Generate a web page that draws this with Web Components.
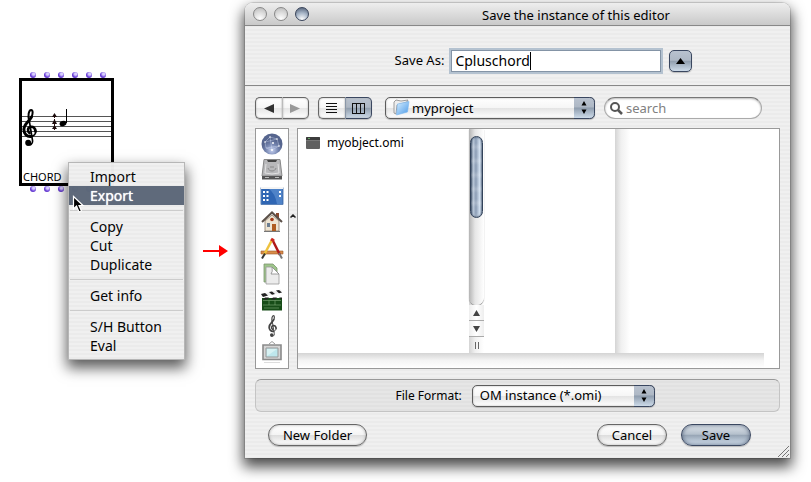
<!DOCTYPE html>
<html lang="en">
<head>
<meta charset="utf-8">
<title>Save the instance of this editor</title>
<style>
  html, body { margin: 0; background: #fff; }
  body { font: 13px/19px "Noto Sans", "Open Sans", sans-serif; color: #000; overflow: hidden; }
</style>
</head>
<body>
<export-scene></export-scene>
<script>
const STRIPES = 'repeating-linear-gradient(#f0f0f0 0 2px, #ebebeb 2px 4px)';

function define(name, html, setup) {
  const template = document.createElement('template');
  template.innerHTML = html;
  customElements.define(name, class extends HTMLElement {
    constructor() {
      super();
      this.attachShadow({ mode: 'open' }).append(template.content.cloneNode(true));
    }
    connectedCallback() { if (setup) setup(this, this.shadowRoot); }
  });
}

/* ---------- left side: patch object and its menu ---------- */

define('treble-clef', `
<style>
  :host { display: block; }
  svg { display: block; width: 100%; height: 100%; }
</style>
<svg viewBox="0 0 44 112" fill="none" stroke="currentColor" stroke-linecap="round" aria-hidden="true">
  <path stroke-width="6" d="M21 36C16 20 20 3 27 3C33 3 33 16 27 27"/>
  <path stroke-width="9" d="M28 24C21 39 5 44 5 62C5 76 15 84 26 83"/>
  <path stroke-width="5" d="M24 83C36 83 42 75 41 66"/>
  <path stroke-width="8" d="M40 68C40 58 33 53 26 54C16 56 15 67 22 73"/>
  <path stroke-width="5" d="M21 34L31 94C33 106 24 111 15 108"/>
  <circle cx="18" cy="102" r="9" fill="currentColor" stroke="none"/>
</svg>`);

define('port-row', `
<style>
  :host { display: flex; gap: 8px; height: 6px; padding-left: 11px; }
  i { width: 6px; height: 6px; border-radius: 50%; background: radial-gradient(circle at 60% 35%, #d9d0ff 0 1px, #6a3fd8 3px, #4a20b0); }
</style>`, (host, root) => {
  for (let n = 0; n < 6; n++) root.append(document.createElement('i'));
});

define('chord-object', `
<style>
  :host { display: block; width: 95px; }
  .box { box-sizing: border-box; height: 108px; border: 3px solid #000; background: #fff; display: flex; flex-direction: column; }
  svg { display: block; width: 100%; height: 89px; }
  .staff { display: grid; }
  .staff > * { grid-area: 1 / 1; }
  treble-clef { width: 15px; height: 37px; margin-top: 28px; }
  .name { font-size: 11px; line-height: 13px; padding-left: 1px; }
</style>
<port-row></port-row>
<div class="box">
  <div class="staff">
    <svg viewBox="0 0 89 89" aria-hidden="true">
      <g stroke="#555" shape-rendering="crispEdges">
        <path d="M0 35.500H89M0 40.500H89M0 45.500H89M0 50.500H89M0 55.500H89"/>
      </g>
      <path d="M32.500 34V50" stroke="#301010" stroke-width="1" stroke-dasharray="3 1"/>
      <path d="M30 36L32.500 32L35 36ZM30 43L32.500 38L35 43ZM30 48L32.500 44L35 48Z" fill="#1a0a0a"/>
      <ellipse cx="41" cy="42.500" rx="3.500" ry="2.600" transform="rotate(-20 41 42.500)"/>
      <path d="M44.500 42V28" stroke="#000"/>
    </svg>
    <treble-clef></treble-clef>
  </div>
  <div class="name">CHORD</div>
</div>
<port-row></port-row>`);

define('menu-item', `
<style>
  :host { display: block; }
  button { display: block; width: 100%; height: 19px; border: 0; padding: 0 0 0 21px; background: none; font: inherit; font-size: 14px; line-height: 19px; text-align: left; color: #000; }
  :host([selected]) button { background: #5c6879; color: #fff; text-shadow: 0 0 1px #fff; }
</style>
<button type="button" role="menuitem"><slot></slot></button>`);

define('menu-rule', `
<style>
  :host { display: block; height: 12px; padding: 5px 1px 0; box-sizing: border-box; }
  hr { margin: 0; border: 0; height: 1px; background: #ccc; }
</style><hr>`);

define('context-menu', `
<style>
  :host { display: block; box-sizing: border-box; width: 117px; padding: 4px 0; border: 1px solid #b5b5b5; background: ${STRIPES}; opacity: .98; box-shadow: 0 7px 13px 1px rgba(0,0,0,.65); }
</style>
<slot></slot>`);

define('mouse-pointer', `
<style>:host { display: block; width: 13px; height: 19px; } svg { display: block; }</style>
<svg width="13" height="19" viewBox="0 0 13 19" aria-hidden="true"><path d="M1.500 1.500V14L4.500 11L7 17L9.500 16L7 10.500H11Z" fill="#000" stroke="#fff" stroke-width="1.200"/></svg>`);

define('patch-canvas', `
<style>
  :host { display: block; position: relative; height: 482px; }
  chord-object { position: absolute; left: 19px; top: 72px; }
  context-menu { position: absolute; left: 68px; top: 162px; }
  mouse-pointer { position: absolute; left: 72px; top: 195px; }
  svg { position: absolute; left: 203px; top: 245px; }
</style>
<chord-object></chord-object>
<context-menu role="menu">
  <menu-item>Import</menu-item>
  <menu-item selected>Export</menu-item>
  <menu-rule></menu-rule>
  <menu-item>Copy</menu-item>
  <menu-item>Cut</menu-item>
  <menu-item>Duplicate</menu-item>
  <menu-rule></menu-rule>
  <menu-item>Get info</menu-item>
  <menu-rule></menu-rule>
  <menu-item>S/H Button</menu-item>
  <menu-item>Eval</menu-item>
</context-menu>
<mouse-pointer></mouse-pointer>
<svg width="25" height="12" viewBox="0 0 25 12" aria-hidden="true"><path d="M0 5H16V0L25 6L16 12V7H0Z" fill="#f00"/></svg>`);

/* ---------- controls ---------- */

define('aqua-button', `
<style>
  :host { display: block; }
  button { box-sizing: border-box; display: block; width: 100%; height: 22px; padding: 0 13px; border: 1px solid #666; border-radius: 11px; font: inherit; line-height: 19px; color: #000; white-space: nowrap;
    background: linear-gradient(#fff, #f4f4f4 48%, #dedede 52%, #fff); box-shadow: inset 0 0 3px #aaa, 0 1px 1px #bbb; }
  :host([primary]) button { border-color: #3a4760; background: linear-gradient(#dfe5ec, #b5c0cc 46%, #98a6b6 52%, #d5e2f0); box-shadow: inset 0 0 4px #56657c, 0 1px 1px #bbb; }
</style>
<button type="button"><slot></slot></button>`);

define('aqua-select', `
<style>
  :host { display: flex; align-items: center; gap: 10px; }
  .field { position: relative; flex: 1; }
  select { appearance: none; box-sizing: border-box; display: block; width: 100%; height: 22px; margin: 0; padding: 0 24px 0 7px; border: 1px solid #5c5c5c; border-radius: 5px; font: inherit; line-height: 19px; color: #000;
    background: linear-gradient(#fff, #f6f6f6 48%, #e4e4e4 52%, #fff); box-shadow: inset 0 0 2px #aaa, 0 1px 1px #bbb; }
  :host([icon]) select { padding-left: 26px; }
  .cap { position: absolute; right: 0; top: 0; width: 21px; height: 22px; pointer-events: none; }
  .folder { position: absolute; left: 8px; top: 2px; pointer-events: none; }
  :host(:not([icon])) .folder { display: none; }
  label { font-size: 12px; }
  label:empty { display: none; }
</style>
<label for="s"></label>
<div class="field">
  <select id="s"><option></option></select>
  <svg class="folder" width="17" height="17" viewBox="0 0 17 17" aria-hidden="true">
    <defs><linearGradient id="f" x1="0" x2="1" y2="1"><stop offset="0" stop-color="#d8efff"/><stop offset="1" stop-color="#4b9ae8"/></linearGradient></defs>
    <path d="M1 3L3 1L8 2L15 1L14 3L4 6L3 15L1 14Z" fill="#eee" stroke="#888" stroke-width=".8"/>
    <path d="M4.500 5L16 2.500L14.500 13L3.500 16Z" fill="url(#f)" stroke="#79b5ec" stroke-width=".6"/>
  </svg>
  <svg class="cap" viewBox="0 0 21 22" aria-hidden="true">
    <defs><linearGradient id="g" x2="0" y2="1"><stop offset="0" stop-color="#b9c2cf"/><stop offset=".45" stop-color="#aeb8c5"/><stop offset=".5" stop-color="#8f9dae"/><stop offset="1" stop-color="#d0deec"/></linearGradient></defs>
    <path d="M0 .5H15.500Q20.500 .5 20.500 5.500V16.500Q20.500 21.500 15.500 21.500H0Z" fill="url(#g)"/>
    <path d="M0 .5H15.500Q20.500 .5 20.500 5.500V16.500Q20.500 21.500 15.500 21.500H0" fill="none" stroke="#3a4760"/>
    <path d="M7.500 8.500L10 4L12.500 8.500ZM7.500 12.500L10 17L12.500 12.500Z"/>
  </svg>
</div>`, (host, root) => {
  root.querySelector('label').textContent = host.getAttribute('label') || '';
  root.querySelector('option').textContent = host.getAttribute('value');
  if (!host.hasAttribute('label')) root.querySelector('select').setAttribute('aria-label', 'Folder');
});

define('segment-pair', `
<style>
  :host { display: flex; width: 54px; }
  button { flex: 1; height: 22px; padding: 0; border: 1px solid #666; background: linear-gradient(#fff, #f6f6f6 48%, #e6e6e6 52%, #fff); box-shadow: inset 0 0 2px #aaa, 0 1px 1px #bbb; display: grid; place-items: center; }
  button:first-of-type { border-radius: 5px 0 0 5px; border-right-width: 0; }
  button:last-of-type { border-radius: 0 5px 5px 0; border-left-color: #bbb; }
  :host([pressed]) button:last-of-type { background: linear-gradient(#b9c2cf, #aeb8c5 46%, #919faf 52%, #cddbe9); border-color: #3a4760; border-left-color: #8a97a8; }
</style>
<button type="button"><slot name="first"></slot></button><button type="button"><slot name="last"></slot></button>`, (host, root) => {
  const names = host.getAttribute('names').split(',');
  root.querySelectorAll('button').forEach((b, i) => b.setAttribute('aria-label', names[i]));
});

define('search-field', `
<style>
  :host { display: flex; align-items: center; gap: 3px; box-sizing: border-box; height: 22px; padding: 0 8px 0 5px; border: 1px solid #aaa; border-top-color: #777; border-radius: 11px; background: #fff; box-shadow: inset 0 1px 2px #bbb; }
  svg { flex: none; }
  input { flex: 1; min-width: 0; border: 0; padding: 0; outline: 0; background: none; font: inherit; line-height: 19px; color: #000; }
  input::placeholder { color: #808080; opacity: 1; }
</style>
<svg width="13" height="13" viewBox="0 0 13 13" fill="none" stroke="#555" aria-hidden="true"><circle cx="5" cy="5" r="4" stroke-width="2"/><path d="M8 8L12 12" stroke-width="2.500"/></svg>
<input type="search" placeholder="search" aria-label="search">`);

define('title-bar', `
<style>
  :host { display: flex; align-items: center; gap: 7px; box-sizing: border-box; height: 23px; padding-left: 8px; border-bottom: 1px solid #888; border-radius: 8px 8px 0 0; background: linear-gradient(#eee, #c9c9c9); }
  button { width: 14px; height: 14px; padding: 0; border: 1px solid #888; border-radius: 50%; background: radial-gradient(circle at 50% 90%, #fff, #ddd 50%, #b8b8b8); }
  button:nth-of-type(3) { border-color: #39445a; background: radial-gradient(circle at 50% 95%, #fff, #a8b6c8 50%, #4a5870); }
  h1 { flex: 1; margin: 0 0 0 46px; font: inherit; line-height: 22px; padding-top: 1px; text-align: center; }
</style>
<button type="button" aria-label="Close"></button><button type="button" aria-label="Minimize"></button><button type="button" aria-label="Zoom"></button>
<h1><slot></slot></h1>`);

define('save-as-row', `
<style>
  :host { display: flex; align-items: center; justify-content: center; box-sizing: border-box; height: 60px; padding: 10px 0 0 52px; border-bottom: 1px solid #888; }
  .field { position: relative; margin: 0 8px 0 7px; }
  input { display: block; box-sizing: border-box; width: 210px; height: 22px; padding: 0 3px; border: 1px solid #8494a6; outline: 0; box-shadow: 0 0 0 2px #b4c2d0; font: inherit; font-size: 14px; line-height: 19px; color: #000; background: #fff; caret-color: transparent; }
  .caret { position: absolute; inset: 2px auto 2px 4px; display: flex; font-size: 14px; pointer-events: none; }
  .caret::before { content: attr(data-before); visibility: hidden; }
  .caret::after { content: ""; width: 1px; background: #000; }
  button { width: 23px; height: 22px; padding: 0; border: 1px solid #3a4760; border-radius: 5px; background: linear-gradient(#b9c2cf, #aeb8c5 46%, #919faf 52%, #cddbe9); box-shadow: 0 1px 1px #bbb; display: grid; place-items: center; }
</style>
<label for="name">Save As:</label>
<span class="field"><input id="name" type="text" value="Cpluschord"><span class="caret" data-before="Cpluschord"></span></span>
<button type="button" aria-label="Collapse"><svg width="9" height="6" viewBox="0 0 9 6" aria-hidden="true"><path d="M0 6L4.500 0L9 6Z"/></svg></button>`);

/* ---------- file browser ---------- */

define('places-list', `
<style>
  :host { display: block; box-sizing: border-box; width: 34px; border: 1px solid #999; background: #fff; padding-top: 2px; }
  nav { display: flex; flex-direction: column; }
  button { height: 26px; padding: 0; border: 0; background: none; display: grid; place-items: center; }
  svg { display: block; width: 24px; height: 24px; }
  treble-clef { width: 11px; height: 22px; color: #444; }
</style>
<nav aria-label="Places">
  <button type="button" aria-label="Network"><svg viewBox="0 0 24 24"><defs><radialGradient id="n" cx=".5" cy=".8"><stop offset="0" stop-color="#c4cff0"/><stop offset=".6" stop-color="#7484ae"/><stop offset="1" stop-color="#56658e"/></radialGradient></defs><circle cx="12" cy="12" r="10.500" fill="url(#n)"/><path d="M5 10L10 5L17 7L19 14L12 18L6 16ZM10 5L12 18M5 10L17 7M6 16L19 14" fill="none" stroke="#d5ddf5" stroke-width=".4"/><g fill="#fff"><circle cx="5" cy="10" r=".8"/><circle cx="10" cy="5" r=".8"/><circle cx="17" cy="7" r=".8"/><circle cx="19" cy="14" r=".8"/><circle cx="12" cy="18" r="1"/><circle cx="13" cy="11" r="1"/></g></svg></button>
  <button type="button" aria-label="Disk"><svg viewBox="0 0 24 24"><path d="M4 1.500H20L22 18H2Z" fill="#b8b8ba" stroke="#888"/><path d="M2 18H22V21.500H2Z" fill="#555"/><path d="M7 2H17L16 4H8Z" fill="#444"/><path d="M6 6L5 15Q12 17 19 15L18 6" fill="none" stroke="#e2e2e2"/><path d="M8 10C9 14 15 14 16 10M10 9H14" fill="none" stroke="#888"/><path d="M5 19.500H9M15 19.500H19" stroke="#bbb"/></svg></button>
  <button type="button" aria-label="Desktop"><svg viewBox="0 0 24 24"><path d="M1 3.500H23V20.500H1Z" fill="#2f66b4" stroke="#5d83b8"/><path d="M9 5L22 4V20H17Q15 9 9 5Z" fill="#4f83c8"/><path d="M1 3H23V5H1Z" fill="#f4f4f4"/><path d="M3 7H5V9H3ZM3 11H5V13H3ZM3 15H5V17H3ZM6.500 7H8.500V9H6.500ZM6.500 11H8.500V13H6.500ZM6.500 15H8.500V17H6.500ZM19 7H21V9H19ZM19 11H21V13H19Z" fill="#fff"/></svg></button>
  <button type="button" aria-label="Home"><svg viewBox="0 0 24 24"><path d="M5 11L12 5L19 11V21H5Z" fill="#eee4d2" stroke="#8a7a68" stroke-width=".8"/><path d="M16 3H19V9L16 6Z" fill="#8a4a30"/><path d="M2 12L12 2.500L22 12" fill="none" stroke="#5b5048" stroke-width="2"/><path d="M12 14H16V21H12Z" fill="#b05c20"/><path d="M7 13H10V17H7Z" fill="#6d7e91"/><circle cx="12" cy="9.500" r="1.800" fill="#a33a18"/><path d="M4 21.500H20" stroke="#777"/></svg></button>
  <button type="button" aria-label="Applications"><svg viewBox="0 0 24 24"><path d="M1 15H23V18H1Z" fill="#d98d4a" stroke="#9a5826" stroke-width=".6"/><path d="M12 3L20 19" stroke="#b01818" stroke-width="2.500"/><path d="M19 17L22 22.500" stroke="#777" stroke-width="2"/><path d="M12 4L4 19" stroke="#eec23e" stroke-width="2.500"/><path d="M5 17.500L2 22.500" stroke="#333" stroke-width="2"/><path d="M11 3L14 5" stroke="#cc2a20" stroke-width="3"/></svg></button>
  <button type="button" aria-label="Documents"><svg viewBox="0 0 24 24"><path d="M4 2H13L17 6V20H4Z" fill="#9ec58a" stroke="#7c9670" stroke-width=".8"/><path d="M6 5H12L19 12V22H6Z" fill="#ececec" stroke="#999" stroke-width=".8"/><path d="M12 5Q13 10 11 12H19Z" fill="#fff" stroke="#888" stroke-width=".8"/></svg></button>
  <button type="button" aria-label="Movies"><svg viewBox="0 0 24 24"><path d="M2 10H22V22.500H2Z" fill="#174d18"/><path d="M1 6L21 1.500L22 4.500L2 9Z" fill="#eee"/><path d="M1 6L5 5L8 7.500L3 9ZM9 4L12 3.500L15 6L12 6.800ZM16 2.500L19 2L22 4.500L19 5.200ZM5 9.500H9L7 11.500H3ZM13 9.500H17L15 11.500H11ZM19 9.500H22V11.500Z" fill="#222"/><path d="M3 12.500H21M3 17H21M9 12.500V17M15 12.500V17M4 20H19" stroke="#96be8e" stroke-width=".5"/></svg></button>
  <button type="button" aria-label="Music"><treble-clef></treble-clef></button>
  <button type="button" aria-label="Pictures"><svg viewBox="0 0 24 24"><path d="M9 4L12 1.500L15 4" fill="none" stroke="#999"/><path d="M3 5H21V19.500H3Z" fill="#d5d5d5" stroke="#8a8a8a" stroke-width="1.600"/><path d="M6 8H18V17H6Z" fill="#bee7ec" stroke="#999"/><path d="M7 9H17L7 16Z" fill="#d8f2f3"/><path d="M4 22.500H20" stroke="#ddd"/></svg></button>
</nav>`);

define('scroll-track', `
<style>
  :host { display: flex; flex-direction: column; flex: none; width: 15px; background: linear-gradient(90deg, #d4d4d4, #f0f0f0 40%, #fff); }
  :host(:not([active])) * { display: none; }
  .track { flex: 1; padding: 7px 0 0; border-radius: 0 0 8px 8px; background: linear-gradient(90deg, #b4b4b4, #e6e6e6 40%, #fff); box-shadow: 0 1px 1px #888; }
  .thumb { box-sizing: border-box; height: 82px; margin: 0 1px; border: 1px solid #33435a; border-radius: 7px; background: repeating-linear-gradient(transparent 0 6px, rgba(255,255,255,.18) 10px, transparent 14px), linear-gradient(90deg, #56677f, #b9c7d8 20%, #8c9db5 45%, #d4e2f2 80%, #8293a9); box-shadow: inset 0 0 2px #33435a; }
  button { height: 16px; padding: 0; border: 0; border-bottom: 1px solid #aaa; background: linear-gradient(90deg, #eee, #fff 50%, #eee); display: grid; place-items: center; }
  .grip { height: 16px; display: flex; justify-content: center; align-items: center; gap: 2px; }
  .grip i { width: 1px; height: 7px; background: #666; }
</style>
<div class="track"><div class="thumb"></div></div>
<button type="button" aria-label="Scroll up"><svg width="7" height="6" viewBox="0 0 7 6" fill="#444"><path d="M0 6L3.500 0L7 6Z"/></svg></button>
<button type="button" aria-label="Scroll down"><svg width="7" height="6" viewBox="0 0 7 6" fill="#444"><path d="M0 0L3.500 6L7 0Z"/></svg></button>
<div class="grip"><i></i><i></i></div>`);

define('file-row', `
<style>
  :host { display: block; }
  button { display: flex; align-items: center; gap: 7px; width: 100%; height: 19px; border: 0; padding: 0 8px; background: none; font: inherit; font-size: 12px; line-height: 19px; color: #000; text-align: left; }
</style>
<button type="button"><svg width="14" height="12" viewBox="0 0 14 12" aria-hidden="true"><rect width="14" height="12" rx="1" fill="#606060"/><path d="M0 1Q0 0 1 0H13Q14 0 14 1V3H0Z" fill="#3c3c3c"/><path d="M2 1.500H4" stroke="#6a6"/><path d="M0 3.500H14" stroke="#777"/></svg><slot></slot></button>`);

define('column-browser', `
<style>
  :host { display: flex; flex-direction: column; box-sizing: border-box; border: 1px solid #999; background: #fff; }
  .columns { flex: 1; display: flex; }
  .column { flex: 0 0 auto; box-sizing: border-box; width: 131px; }
  .column.files { width: 171px; padding-top: 4px; }
  .scroll { height: 15px; margin-right: 15px; background: linear-gradient(#d4d4d4, #f4f4f4 50%, #fff); }
</style>
<div class="columns">
  <div class="column files"><slot></slot></div><scroll-track active></scroll-track>
  <div class="column"></div><scroll-track></scroll-track>
</div>
<div class="scroll"></div>`);

/* ---------- dialog ---------- */

define('save-dialog', `
<style>
  :host { display: block; border-radius: 8px 8px 0 0; background: ${STRIPES}; box-shadow: 0 0 0 1px rgba(0,0,0,.12), 0 7px 14px 2px rgba(0,0,0,.7); position: relative; }
  .tools { display: flex; align-items: center; gap: 9px; padding: 11px 28px 9px 10px; }
  segment-pair { flex: none; }
  segment-pair + segment-pair { margin-right: 4px; }
  aqua-select.folder { flex: 210 1 0; min-width: 0; }
  search-field { flex: 143 1 0; min-width: 0; }
  .browser { display: flex; height: 241px; margin: 0 10px; }
  .toggle { width: 8px; padding: 0; border: 0; background: none; display: grid; place-items: center; margin-top: -65px; }
  .toggle svg { display: block; }
  column-browser { flex: 1; min-width: 0; }
  .format { display: flex; justify-content: center; align-items: center; box-sizing: border-box; height: 33px; margin: 10px 10px 12px; padding-left: 15px; border: 1px solid #c4c4c4; border-top-color: #999; border-radius: 6px; background: rgba(0,0,0,.04); }
  .format aqua-select { width: 259px; }
  .actions { display: flex; gap: 14px; padding: 0 39px 12px 23px; }
  .actions aqua-button { width: 70px; }
  .actions .new { width: 99px; margin-right: auto; }
  .grip { position: absolute; right: 1px; bottom: 1px; }
</style>
<title-bar>Save the instance of this editor</title-bar>
<save-as-row></save-as-row>
<div class="tools">
  <segment-pair names="Back,Forward">
    <svg slot="first" width="10" height="9" viewBox="0 0 10 9"><path d="M0 4.500L10 0V9Z" fill="#333"/></svg>
    <svg slot="last" width="10" height="9" viewBox="0 0 10 9"><path d="M10 4.500L0 0V9Z" fill="#999"/></svg>
  </segment-pair>
  <segment-pair pressed names="List view,Column view">
    <svg slot="first" width="11" height="11" viewBox="0 0 11 11" stroke="#111" shape-rendering="crispEdges"><path d="M0 .5H11M0 3.500H11M0 6.500H11M0 9.500H11"/></svg>
    <svg slot="last" width="13" height="11" viewBox="0 0 13 11" fill="none" stroke="#111" shape-rendering="crispEdges"><path d="M.5 .5H12.500V10.500H.5ZM4.500 0V11M8.500 0V11"/></svg>
  </segment-pair>
  <aqua-select class="folder" icon value="myproject"></aqua-select>
  <search-field></search-field>
</div>
<div class="browser">
  <places-list></places-list>
  <button class="toggle" type="button" aria-label="Hide places"><svg width="6" height="4" viewBox="0 0 6 4"><path d="M.5 3.500L3 1L5.500 3.500" fill="none" stroke="#222" stroke-width="1.500"/></svg></button>
  <column-browser><file-row>myobject.omi</file-row></column-browser>
</div>
<div class="format"><aqua-select label="File Format:" value="OM instance (*.omi)"></aqua-select></div>
<div class="actions">
  <aqua-button class="new">New Folder</aqua-button>
  <aqua-button>Cancel</aqua-button>
  <aqua-button primary>Save</aqua-button>
</div>
<svg class="grip" width="11" height="11" viewBox="0 0 11 11" stroke="#777" aria-hidden="true"><path d="M0 11L11 0M4 11L11 4M8 11L11 8"/></svg>`);

define('export-scene', `
<style>
  :host { display: grid; grid-template-columns: 245px minmax(0, 1fr); align-items: start; min-height: 482px; overflow: hidden; }
  save-dialog { margin: 3px 21px 0 0; }
</style>
<patch-canvas></patch-canvas>
<save-dialog></save-dialog>`);
</script>
</body>
</html>
